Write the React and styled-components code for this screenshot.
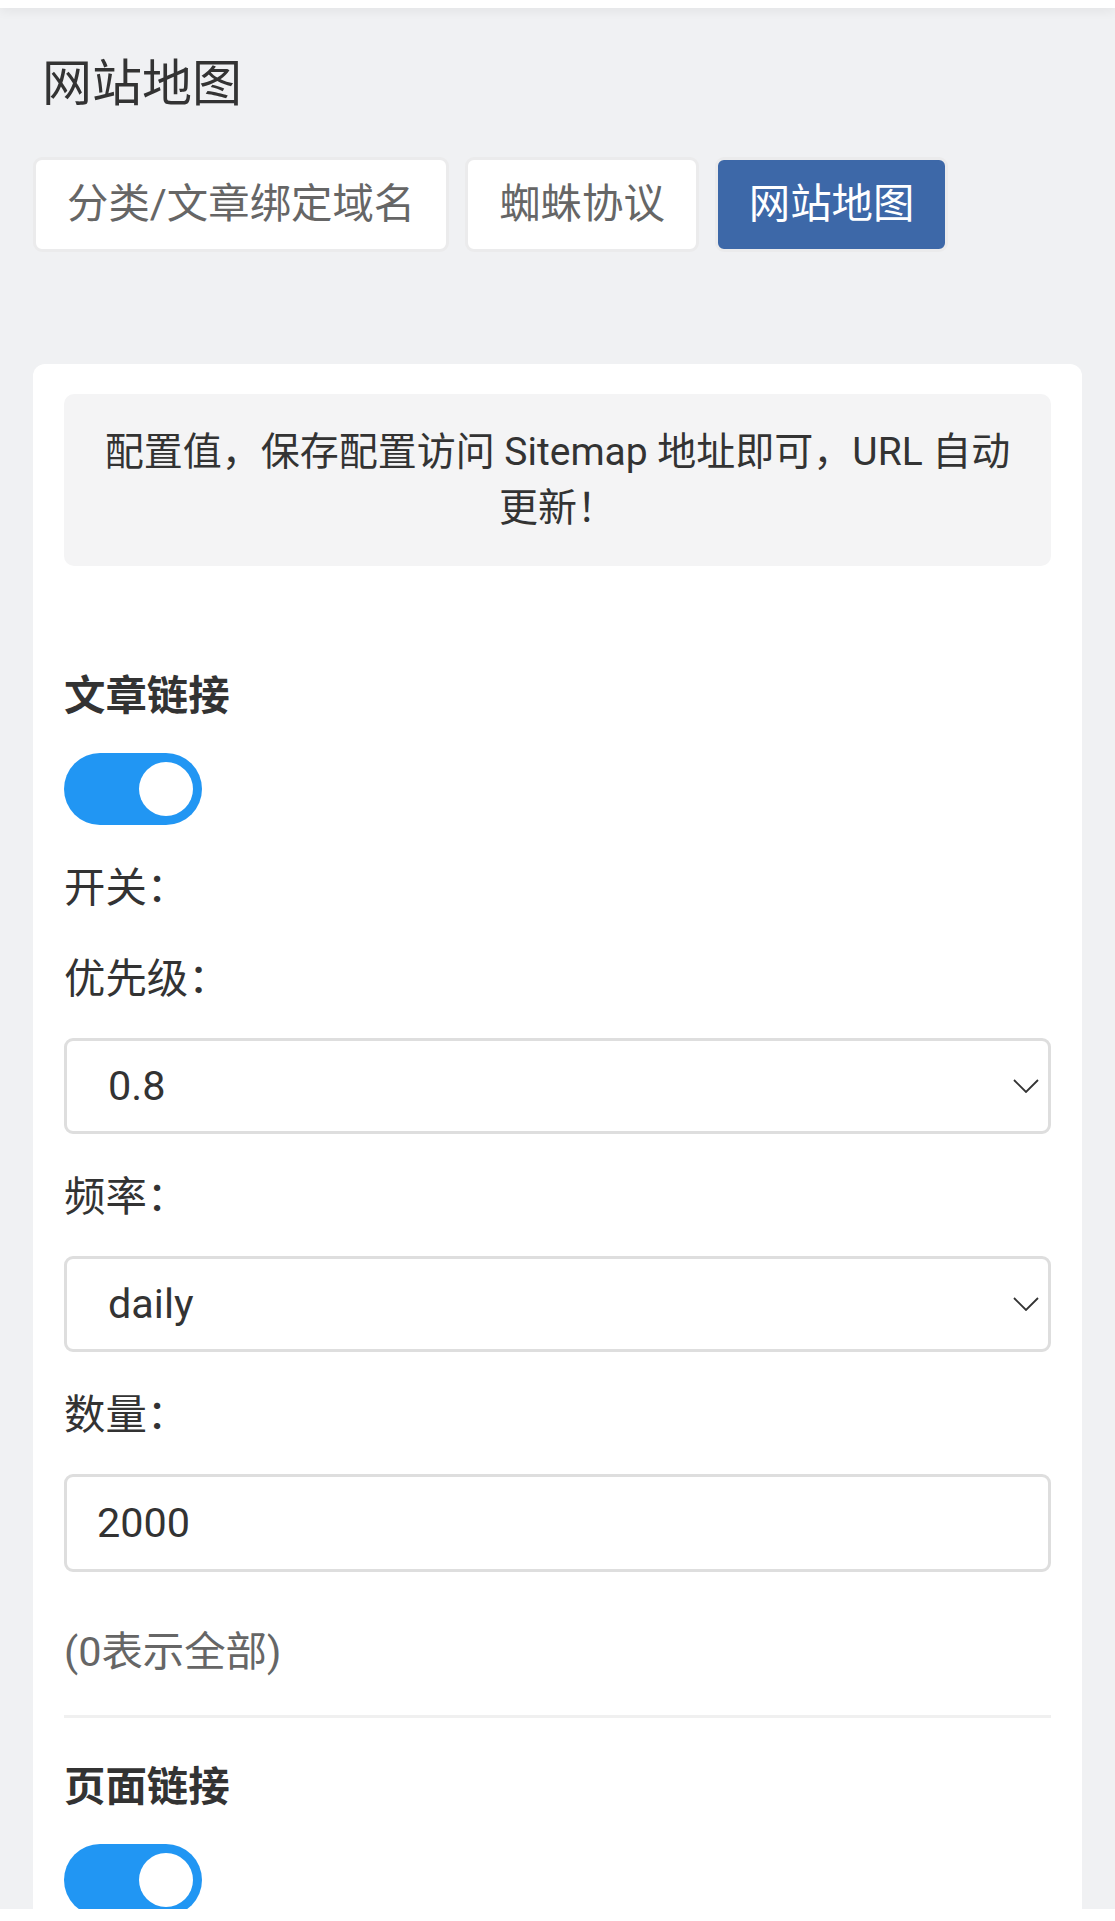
import React, { useState } from 'react'
import styled, { createGlobalStyle } from 'styled-components'

const GlobalStyle = createGlobalStyle`
    html, body {
        margin: 0;
        padding: 0;
        background: #f0f1f3;
    }
    body {
        font-family: Roboto, "Noto Sans CJK SC", "Noto Sans", sans-serif;
        color: #333;
    }
    * {
        box-sizing: border-box;
    }
`

const Page = styled.div`
    min-height: 1921px;
    background: #f0f1f3;
    padding-bottom: 60px;
`

const TopBar = styled.div`
    height: 8px;
    background: #fff;
    box-shadow: 0 2px 12px rgba(0, 0, 0, 0.08);
`

const BottomBar = styled.div`
    position: fixed;
    left: 0;
    right: 0;
    bottom: 0;
    height: 12px;
    background: #fff;
`

const Title = styled.h1`
    margin: 46px 0 0;
    padding-left: 42px;
    font-size: 50px;
    line-height: 60px;
    font-weight: 400;
    color: #333;
`

const Tabs = styled.div`
    display: flex;
    gap: 16px;
    margin-top: 43px;
    padding-left: 33px;
`

const Tab = styled.button`
    height: 95px;
    padding: 0 31px;
    border: 3px solid #ebebec;
    border-radius: 9px;
    font-family: inherit;
    font-size: 41.4px;
    line-height: 1;
    background: ${p => (p.$active ? '#3d68a8' : '#fff')};
    color: ${p => (p.$active ? '#fff' : '#666')};
    cursor: pointer;
`

const Card = styled.div`
    margin: 112px 33px 0;
    padding: 30px 31px 120px;
    background: #fff;
    border-radius: 12px;
`

const Notice = styled.div`
    padding: 30px 28px;
    background: #f4f4f5;
    border-radius: 10px;
    font-size: 39px;
    line-height: 56px;
    text-align: center;
    color: #333;
`

const Heading = styled.h3`
    margin: ${p => p.$top}px 0 0;
    font-size: 41.4px;
    line-height: 56px;
    font-weight: 700;
    color: #333;
`

const SwitchTrack = styled.button`
    display: flex;
    align-items: center;
    justify-content: ${p => (p.$on ? 'flex-end' : 'flex-start')};
    width: 138px;
    height: 72px;
    margin-top: 29px;
    padding: 0 9px;
    border: none;
    border-radius: 36px;
    background: ${p => (p.$on ? '#2196f3' : '#d9d9d9')};
    cursor: pointer;
`

const Knob = styled.span`
    width: 54px;
    height: 54px;
    border-radius: 50%;
    background: #fff;
`

const Label = styled.div`
    margin-top: 35px;
    font-size: 41.4px;
    line-height: 56px;
    color: #333;
`

const SelectWrap = styled.div`
    position: relative;
    margin-top: 31px;
`

const Select = styled.select`
    display: block;
    width: 100%;
    height: 96px;
    padding: 0 60px 0 41px;
    border: 3px solid #dedede;
    border-radius: 9px;
    background: #fff;
    font-family: inherit;
    font-size: 41.4px;
    color: #333;
    appearance: none;
    -webkit-appearance: none;
    outline: none;
`

const Chevron = styled.svg`
    position: absolute;
    right: 12px;
    top: 41px;
    pointer-events: none;
`

const Input = styled.input`
    display: block;
    width: 100%;
    height: 98px;
    margin-top: 31px;
    padding: 0 30px;
    border: 3px solid #dedede;
    border-radius: 9px;
    font-family: inherit;
    font-size: 41.4px;
    color: #333;
    outline: none;
`

const Hint = styled.div`
    margin-top: 52px;
    font-size: 41.4px;
    line-height: 56px;
    color: #666;
`

const Divider = styled.hr`
    margin: 35px 0 0;
    height: 3px;
    border: none;
    background: #f0f0f0;
`

function Switch({ on, onToggle }) {
    return (
        <SwitchTrack $on={on} onClick={onToggle}>
            <Knob />
        </SwitchTrack>
    )
}

function Dropdown({ value, options, onChange }) {
    return (
        <SelectWrap>
            <Select value={value} onChange={e => onChange(e.target.value)}>
                {options.map(o => (
                    <option key={o} value={o}>{o}</option>
                ))}
            </Select>
            <Chevron width="26" height="14" viewBox="0 0 26 14">
                <polyline points="1,1 13,13 25,1" fill="none" stroke="#333" strokeWidth="1.8" />
            </Chevron>
        </SelectWrap>
    )
}

const priorities = ['1.0', '0.9', '0.8', '0.7', '0.6', '0.5', '0.4', '0.3', '0.2', '0.1']
const freqs = ['always', 'hourly', 'daily', 'weekly', 'monthly', 'yearly', 'never']

export default function App() {
    const [tab, setTab] = useState(2)
    const [article, setArticle] = useState({ on: true, priority: '0.8', freq: 'daily', count: '2000' })
    const [pageOn, setPageOn] = useState(true)

    const tabs = ['分类/文章绑定域名', '蜘蛛协议', '网站地图']

    return (
        <Page>
            <GlobalStyle />
            <TopBar />
            <Title>网站地图</Title>
            <Tabs>
                {tabs.map((t, i) => (
                    <Tab key={t} $active={i === tab} onClick={() => setTab(i)}>{t}</Tab>
                ))}
            </Tabs>

            <Card>
                <Notice>配置值，保存配置访问 Sitemap 地址即可，URL 自动更新！</Notice>

                <Heading $top={102}>文章链接</Heading>
                <Switch on={article.on} onToggle={() => setArticle({ ...article, on: !article.on })} />
                <Label>开关：</Label>
                <Label>优先级：</Label>
                <Dropdown
                    value={article.priority}
                    options={priorities}
                    onChange={v => setArticle({ ...article, priority: v })}
                />
                <Label>频率：</Label>
                <Dropdown
                    value={article.freq}
                    options={freqs}
                    onChange={v => setArticle({ ...article, freq: v })}
                />
                <Label>数量：</Label>
                <Input value={article.count} onChange={e => setArticle({ ...article, count: e.target.value })} />
                <Hint>(0表示全部)</Hint>
                <Divider />

                <Heading $top={41}>页面链接</Heading>
                <Switch on={pageOn} onToggle={() => setPageOn(!pageOn)} />
            </Card>
            <BottomBar />
        </Page>
    )
}
